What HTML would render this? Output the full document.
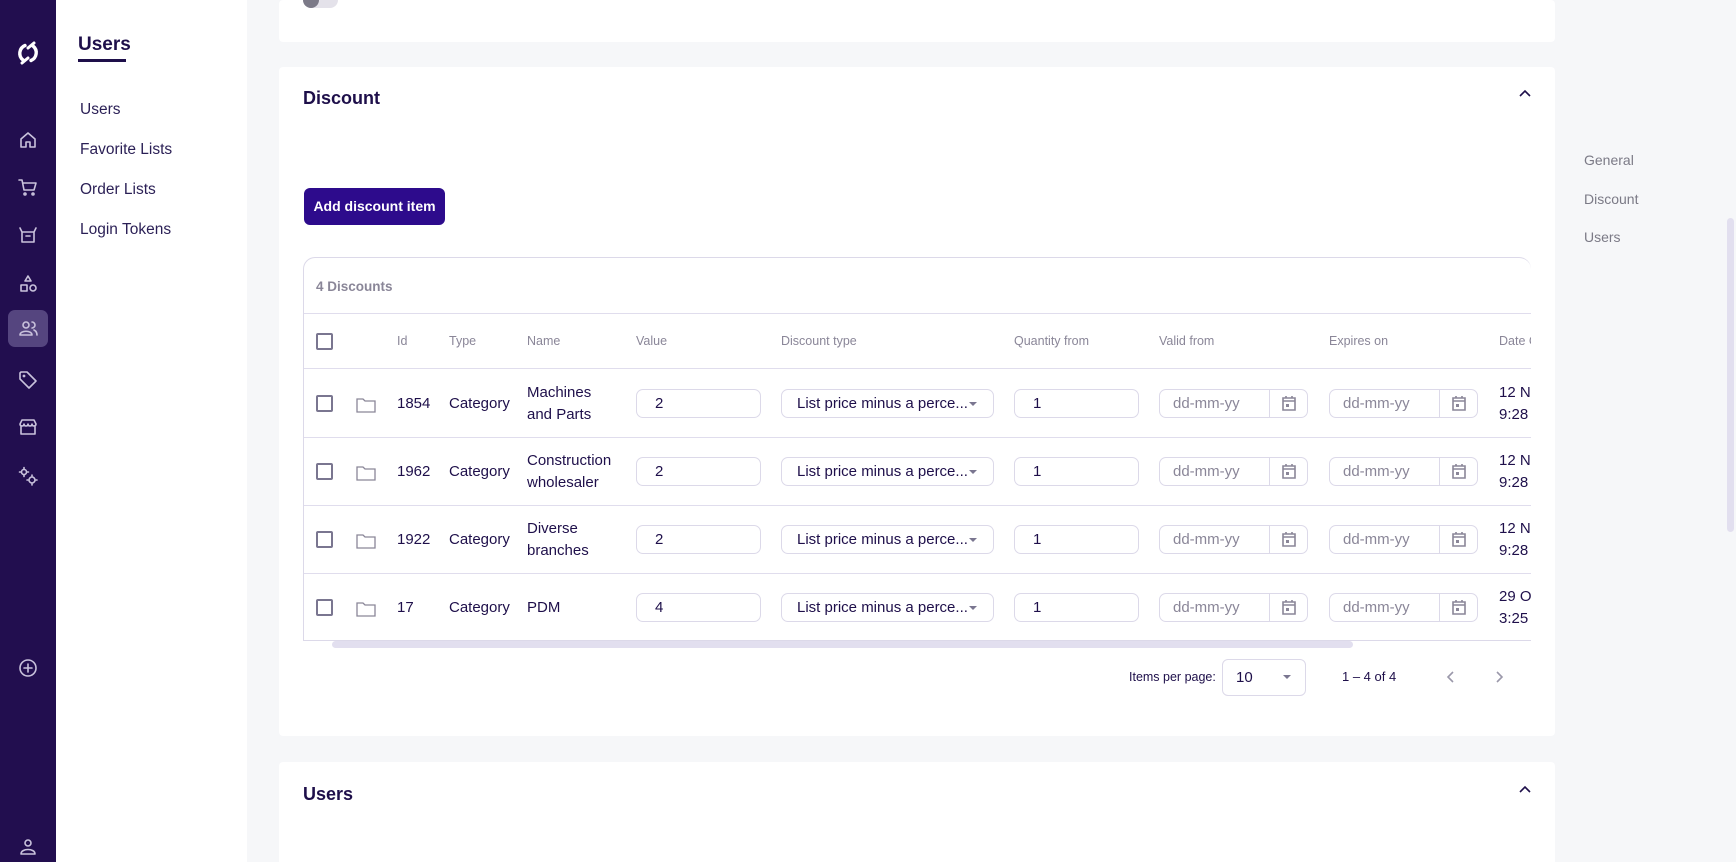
<!DOCTYPE html>
<html><head><meta charset="utf-8"><style>
*{box-sizing:border-box;margin:0;padding:0}
html,body{width:1736px;height:862px;overflow:hidden}
body{background:#f6f7f9;font-family:"Liberation Sans",sans-serif;color:#1e0f4a;position:relative}
.abs{position:absolute}
.side{left:0;top:0;width:56px;height:862px;background:#220e4f}
.side svg{position:absolute;left:17px;width:22px;height:22px;fill:none;stroke:#c9c2dc;stroke-width:1.6;stroke-linecap:round;stroke-linejoin:round}
.sub{left:56px;top:0;width:191px;height:862px;background:#fff}
.sub .t{position:absolute;left:22px;top:34px;font-size:19px;font-weight:bold;color:#1e0f4a}
.sub .u{position:absolute;left:22px;top:59px;width:48px;height:3px;background:#1e0f4a}
.sub .m{position:absolute;left:24px;font-size:15.5px;color:#2a1f55}
.card{position:absolute;left:279px;width:1276px;background:#fff;border-radius:4px}
.h{position:absolute;font-size:18px;font-weight:bold;color:#1e0f4a}
.btn{left:304px;top:188px;width:141px;height:37px;background:#2d0b8c;border-radius:6px;color:#fff;font-size:14px;font-weight:bold;line-height:37px;text-align:center}
.tbl{left:303px;top:257px;width:1228px;height:384px;border:1px solid #dcd9e9;border-right:none;border-radius:12px 12px 0 0;overflow:hidden}
.ln{position:absolute;left:0;width:1228px;height:1px;background:#e0dded}
.cb{position:absolute;width:17px;height:17px;border:2px solid #7a7690;border-radius:2px}
.th{position:absolute;font-size:12.5px;color:#8a8698}
.td{position:absolute;font-size:15px;color:#1e0f4a;line-height:22px}
.in{position:absolute;height:29px;border:1px solid #dcd9e9;border-radius:7px;font-size:15px;line-height:27px;padding-left:18px;color:#1e0f4a}
.ph{color:#8a8698}
.cal{position:absolute;top:-1px;width:39px;height:29px;border-left:1px solid #dcd9e9}
.cal svg{position:absolute;left:11px;top:5px}
.rn{position:absolute;left:1584px;font-size:14px;color:#7b7a86}
</style></head><body>
<div class="abs side">
<svg style="top:39px;width:28px;height:28px;left:14px" viewBox="0 0 28 28"><path d="M20 4 L14 9 M8 24 L14 19" stroke="#fff" stroke-width="3"/><path d="M11 6.5 A8.5 8.5 0 0 0 9 21 M17 21.5 A8.5 8.5 0 0 0 19 7" stroke="#fff" stroke-width="3.4"/></svg>
<svg style="top:129px" viewBox="0 0 22 22"><path d="M4 10 L11 4 L18 10 V18 H13 V13 H9 V18 H4 Z"/></svg>
<svg style="top:176px" viewBox="0 0 22 22"><path d="M2 4 H5 L7 14 H17 L19 7 H6"/><circle cx="8" cy="18" r="1"/><circle cx="16" cy="18" r="1"/></svg>
<svg style="top:224px" viewBox="0 0 22 22"><path d="M3 4 L5 8 H17 L19 4 M5 8 V18 H17 V8 M9 12 H13"/></svg>
<svg style="top:273px" viewBox="0 0 22 22"><path d="M11 3 L14 8 H8 Z"/><rect x="4" y="12" width="6" height="6"/><circle cx="16" cy="15" r="3"/></svg>
<div class="abs" style="left:8px;top:310px;width:40px;height:37px;background:#55457f;border-radius:7px"></div>
<svg style="top:318px" viewBox="0 0 22 22"><circle cx="9" cy="7" r="3"/><path d="M3 17 C3 12 15 12 15 17 Z M15 4 A3 3 0 0 1 15 10 M17 12 C19 13 20 15 20 17"/></svg>
<svg style="top:369px" viewBox="0 0 22 22"><path d="M3 4 V10 L12 19 L19 12 L10 3 H4 Z"/><circle cx="7" cy="7" r=".6"/></svg>
<svg style="top:416px" viewBox="0 0 22 22"><path d="M3 8 L5 4 H17 L19 8 Q19 10 17 10 Q15 10 15 8 Q15 10 13 10 Q11 10 11 8 Q11 10 9 10 Q7 10 7 8 Q7 10 5 10 Q3 10 3 8 M4 10 V18 H18 V10"/></svg>
<svg style="top:465px" viewBox="0 0 22 22"><circle cx="7" cy="7" r="2.5"/><circle cx="15" cy="15" r="3"/><path d="M7 2.5 V4 M7 10 V11.5 M2.5 7 H4 M10 7 H11.5 M15 10 V11 M15 19 V20 M10 15 H11 M19 15 H20"/></svg>
<svg style="top:657px" viewBox="0 0 22 22"><circle cx="11" cy="11" r="8"/><path d="M11 7 V15 M7 11 H15"/></svg>
<svg style="top:836px" viewBox="0 0 22 22"><circle cx="11" cy="7" r="3"/><path d="M4 18 C4 12 18 12 18 18 Z"/></svg>
</div>
<div class="abs sub">
<div class="t">Users</div><div class="u"></div>
<div class="m" style="top:101px">Users</div>
<div class="m" style="top:141px">Favorite Lists</div>
<div class="m" style="top:181px">Order Lists</div>
<div class="m" style="top:221px">Login Tokens</div>
</div>
<div class="card" style="top:0;height:42px"><div class="abs" style="left:24px;top:-8px;width:35px;height:16px;background:#e4e2ea;border-radius:8px"></div><div class="abs" style="left:24px;top:-8px;width:16px;height:16px;background:#7c7a88;border-radius:50%"></div></div>
<div class="card" style="top:67px;height:669px">
<div class="h" style="left:24px;top:21px">Discount</div>
<svg class="abs" style="left:1240px;top:22px" width="12" height="8" viewBox="0 0 12 8"><path d="M1 7 L6 2 L11 7" fill="none" stroke="#1e0f4a" stroke-width="1.6"/></svg>
</div>
<div class="abs btn">Add discount item</div>
<div class="abs tbl">
<div class="td" style="left:12px;top:18px;font-size:13.5px;font-weight:bold;color:#8a8698">4 Discounts</div>
<div class="ln" style="top:55px"></div>
<div class="cb" style="left:12px;top:75px"></div>
<div class="th" style="left:93px;top:76px">Id</div><div class="th" style="left:145px;top:76px">Type</div><div class="th" style="left:223px;top:76px">Name</div><div class="th" style="left:332px;top:76px">Value</div><div class="th" style="left:477px;top:76px">Discount type</div><div class="th" style="left:710px;top:76px">Quantity from</div><div class="th" style="left:855px;top:76px">Valid from</div><div class="th" style="left:1025px;top:76px">Expires on</div><div class="th" style="left:1195px;top:76px;white-space:nowrap">Date C</div>
<div class="ln" style="top:110px"></div>
<div id="rows"></div>
</div>
<div class="abs" style="left:332px;top:641px;width:1021px;height:7px;background:#e2dfef;border-radius:4px"></div>
<div class="abs" style="left:1129px;top:670px;font-size:12.5px;color:#1e0f4a">Items per page:</div>
<div class="abs" style="left:1222px;top:659px;width:84px;height:37px;border:1px solid #dcd9e9;border-radius:6px;font-size:15px;line-height:35px;padding-left:13px">10<span style="position:absolute;right:14px;top:15px;border:4px solid transparent;border-top:4px solid #7a7690"></span></div>
<div class="abs" style="left:1342px;top:669px;font-size:13px">1 – 4 of 4</div>
<svg class="abs" style="left:1446px;top:670px" width="10" height="14" viewBox="0 0 10 14"><path d="M7 2 L2 7 L7 12" fill="none" stroke="#9b98aa" stroke-width="1.6"/></svg>
<svg class="abs" style="left:1494px;top:670px" width="10" height="14" viewBox="0 0 10 14"><path d="M3 2 L8 7 L3 12" fill="none" stroke="#9b98aa" stroke-width="1.6"/></svg>
<div class="card" style="top:762px;height:120px"><div class="h" style="left:24px;top:22px">Users</div>
<svg class="abs" style="left:1240px;top:23px" width="12" height="8" viewBox="0 0 12 8"><path d="M1 7 L6 2 L11 7" fill="none" stroke="#1e0f4a" stroke-width="1.6"/></svg></div>
<div class="rn" style="top:152px">General</div><div class="rn" style="top:191px">Discount</div><div class="rn" style="top:229px">Users</div>
<div class="abs" style="left:1727px;top:218px;width:7px;height:314px;background:#e2dfef;border-radius:4px"></div>
<script>
var d=[["1854","Machines","and Parts","2","12 No","9:28 ."],["1962","Construction","wholesaler","2","12 No","9:28 ."],["1922","Diverse","branches","2","12 No","9:28 ."],["17","PDM","","4","29 Oc","3:25"]];
var h="",cal='<svg width="16" height="18" viewBox="0 0 16 18"><path d="M2 4 H14 V16 H2 Z M2 7 H14 M5 2 V4 M11 2 V4" fill="none" stroke="#8a8698" stroke-width="1.6"/><rect x="5" y="10" width="3" height="3" fill="#8a8698"/></svg>';
d.forEach(function(r,i){var c=146+i*68;
h+='<div class="cb" style="left:12px;top:'+(c-9)+'px"></div>';
h+='<svg class="abs" style="left:52px;top:'+(c-7)+'px" width="20" height="16" viewBox="0 0 20 16"><path d="M1 2 H7 L9 4 H19 V15 H1 Z" fill="none" stroke="#8a8698" stroke-width="1.3"/></svg>';
h+='<div class="td" style="left:93px;top:'+(c-11)+'px">'+r[0]+'</div><div class="td" style="left:145px;top:'+(c-11)+'px">Category</div>';
h+='<div class="td" style="left:223px;top:'+(c-(r[2]?22:11))+'px">'+r[1]+(r[2]?'<br>'+r[2]:'')+'</div>';
h+='<div class="in" style="left:332px;top:'+(c-15)+'px;width:125px">'+r[3]+'</div>';
h+='<div class="in" style="left:477px;top:'+(c-15)+'px;width:213px;padding-left:15px">List price minus a perce...<span style="position:absolute;right:16px;top:12px;border:4px solid transparent;border-top:4px solid #7a7690"></span></div>';
h+='<div class="in" style="left:710px;top:'+(c-15)+'px;width:125px">1</div>';
h+='<div class="in ph" style="left:855px;top:'+(c-15)+'px;width:149px;padding-left:13px">dd-mm-yy<div class="cal" style="left:109px">'+cal+'</div></div>';
h+='<div class="in ph" style="left:1025px;top:'+(c-15)+'px;width:149px;padding-left:13px">dd-mm-yy<div class="cal" style="left:109px">'+cal+'</div></div>';
h+='<div class="td" style="left:1195px;top:'+(c-22)+'px;white-space:nowrap">'+r[4]+'<br>'+r[5]+'</div>';
if(i<3)h+='<div class="ln" style="top:'+(c+33)+'px"></div>';});
document.getElementById("rows").outerHTML=h;
</script>
</body></html>
